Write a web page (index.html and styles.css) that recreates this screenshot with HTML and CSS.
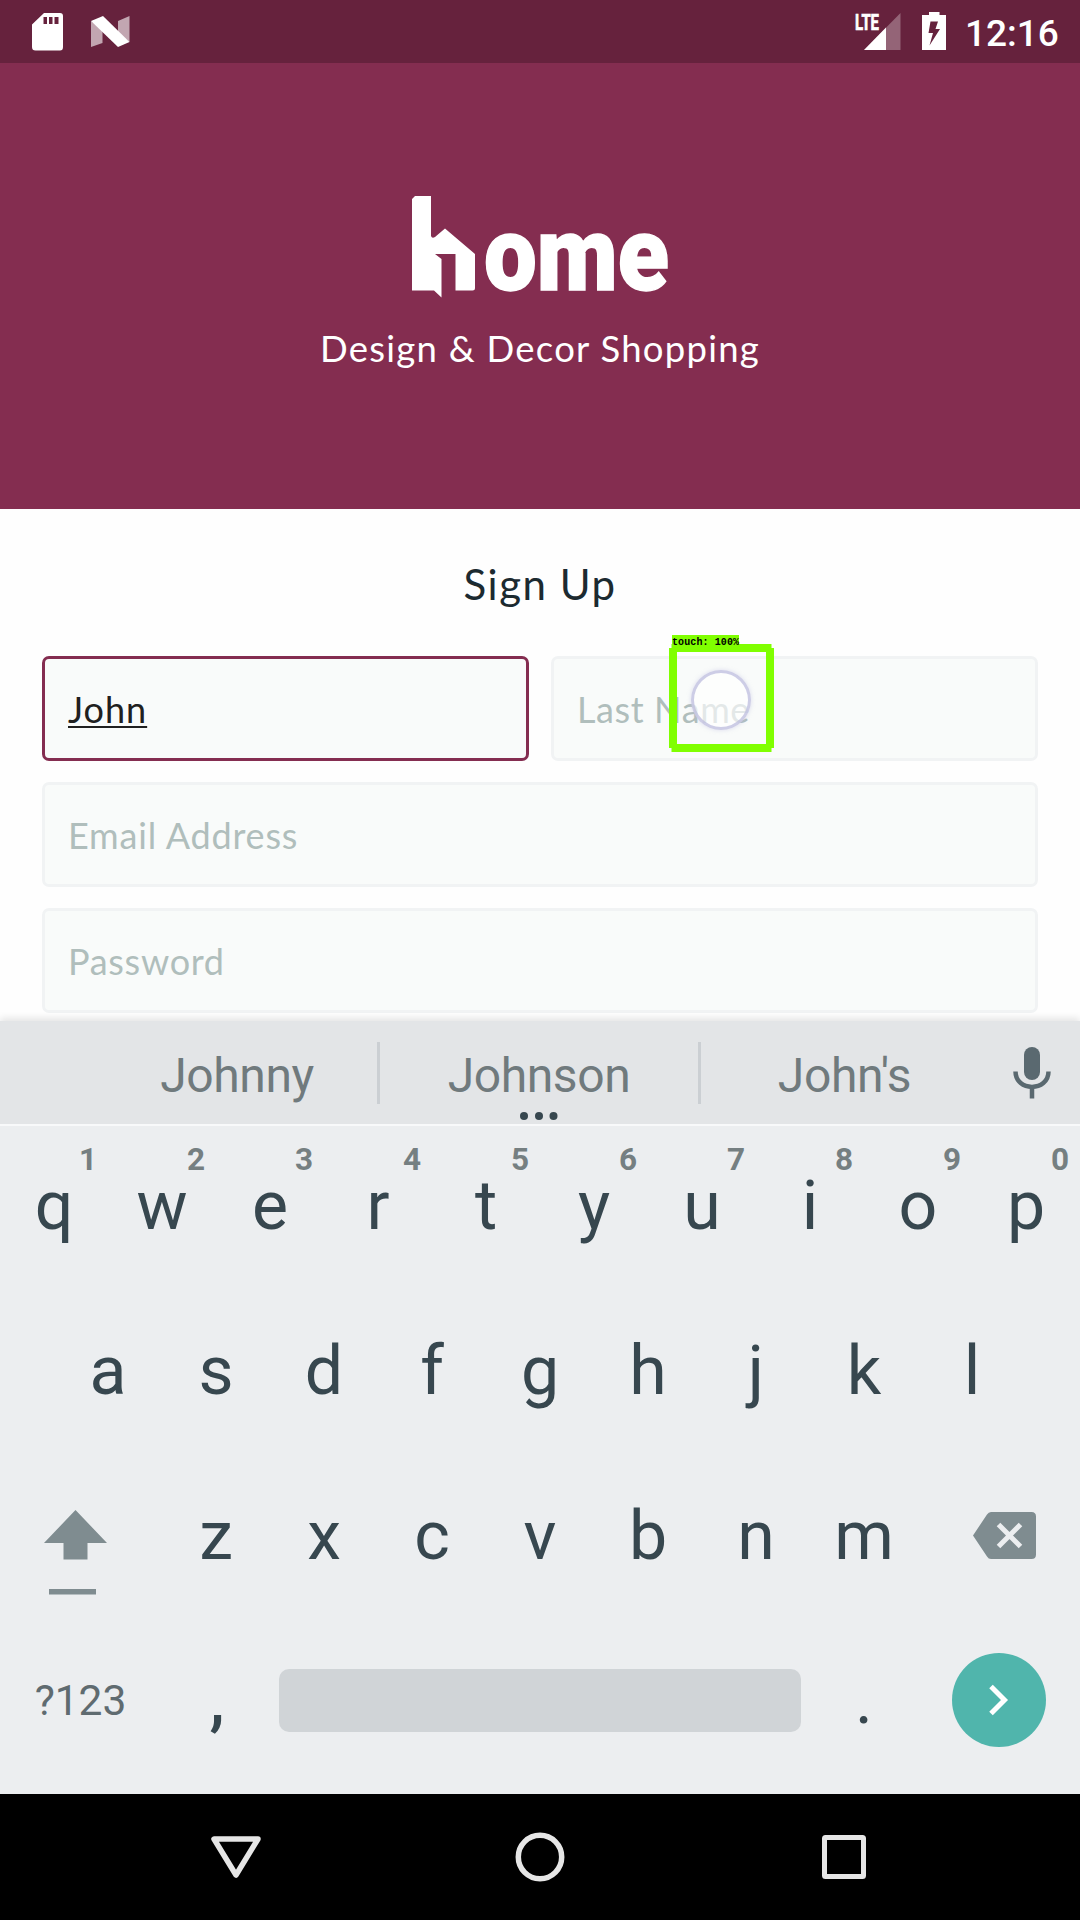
FILE: index.html
```html
<!DOCTYPE html>
<html lang="en">
<head>
<meta charset="utf-8">
<title>Home – Sign Up</title>
<link rel="stylesheet" href="styles.css">
</head>
<body>
<div class="screen">
  <header class="status-bar">
    <svg class="sd" width="31" height="39" viewBox="0 0 31 39"><path fill="#fff" fill-rule="evenodd" d="M12 1H28Q31 1 31 4V35Q31 38.500 28 38.500H3.500Q0 38.500 0 35V12.500ZM11.500 5V12H15V5ZM17 5V12H20.500V5ZM22.500 5V12H26.500V5Z"/></svg>
    <svg class="nougat" width="39" height="32" viewBox="0 0 39 32"><path fill="#fff" opacity=".6" d="M0 5L11.500 13V27L0 31ZM27 5L38.500 0V26L27 18Z"/><path fill="#fff" d="M0 5L12 0L38.500 26L27 31Z"/></svg>
    <span class="spacer"></span>
    <svg class="signal" width="46" height="38" viewBox="0 0 46 38"><path fill="#fff" opacity=".3" d="M45.500 0V37H9Z"/><path fill="#fff" d="M31 14.500V37H9Z"/><rect width="26" height="18" fill="#66223d"/><text x="0" y="16.500" textLength="24" lengthAdjust="spacingAndGlyphs">LTE</text></svg>
    <svg class="battery" width="24" height="38" viewBox="0 0 24 38"><path fill="#fff" fill-rule="evenodd" d="M7 0H17.500V3H24V38H0V3H7ZM8.500 9.500L6.500 21H11L7.500 33.500L18 17H13.500L16 9.500Z"/></svg>
    <span class="clock">12:16</span>
  </header>

  <section class="hero">
    <svg class="logo" width="256" height="103" viewBox="0 0 256 103">
      <path fill="#fff" d="M0 3L3 0H19V40Q20 43 23 41L33 32.500L63 58V92Q63 94.500 60.500 94.500H43.500V58H23L29.500 63V101.500L22 94.500H0Z"/>
      <text x="72" y="93.500" textLength="185" lengthAdjust="spacingAndGlyphs">ome</text>
    </svg>
    <p class="tagline">Design &amp; Decor Shopping</p>
  </section>

  <main class="sign-up">
    <h1 class="title">Sign Up</h1>
    <div class="form">
      <div class="field focused"><span class="typed">John</span></div>
      <div class="field"><span class="last-name">Last Name</span></div>
      <div class="field wide"><span class="email">Email Address</span></div>
      <div class="field wide"><span class="password">Password</span></div>
    </div>
    <div class="touch">
      <svg width="105" height="108" viewBox="0 0 105 108"><path fill="#80ff00" fill-rule="evenodd" d="M2.500 0H102.500V4H105V104H102.500V108H2.500V104H0V4H2.500ZM8 8V100H97V8Z"/></svg>
      <span class="touch-label">touch: 100%</span>
      <span class="touch-dot"></span>
    </div>
  </main>

  <section class="keyboard">
    <div class="suggestions">
      <span class="suggestion first">Johnny</span>
      <span class="suggestion middle">Johnson
        <svg class="more" width="38" height="8" viewBox="0 0 38 8"><g fill="#37474f"><circle cx="4" cy="4" r="4"/><circle cx="19" cy="4" r="4"/><circle cx="33.500" cy="4" r="4"/></g></svg>
      </span>
      <span class="suggestion last">John's</span>
      <svg class="mic" width="38" height="52" viewBox="0 0 38 52"><rect x="11" y="0" width="16" height="33" rx="8" fill="#5a6970"/><path d="M2.500 24.500C2.500 45 35.500 45 35.500 24.500M19 40V51.500" fill="none" stroke="#5a6970" stroke-width="4.500"/></svg>
    </div>
    <div class="keys">
      <div class="row">
        <span class="key">q<sup>1</sup></span><span class="key">w<sup>2</sup></span><span class="key">e<sup>3</sup></span><span class="key">r<sup>4</sup></span><span class="key">t<sup>5</sup></span><span class="key">y<sup>6</sup></span><span class="key">u<sup>7</sup></span><span class="key">i<sup>8</sup></span><span class="key">o<sup>9</sup></span><span class="key">p<sup>0</sup></span>
      </div>
      <div class="row">
        <span class="key">a</span><span class="key">s</span><span class="key">d</span><span class="key">f</span><span class="key">g</span><span class="key">h</span><span class="key">j</span><span class="key">k</span><span class="key">l</span>
      </div>
      <div class="row">
        <span class="key side"><svg width="63" height="86" viewBox="0 0 63 86"><path fill="#7f8c90" d="M31.500 0L63 33H43.500V49.500H19.500V33H0ZM5 79H52V84.500H5Z"/></svg></span>
        <span class="key">z</span><span class="key">x</span><span class="key">c</span><span class="key">v</span><span class="key">b</span><span class="key">n</span><span class="key">m</span>
        <span class="key side erase"><svg width="63" height="47" viewBox="0 0 63 47"><path fill="#7f8c90" d="M18 0H58.500Q63 0 63 4.500V42.500Q63 47 58.500 47H18Q15.500 47 14 44.500L0 23.500L14 2.500Q15.500 0 18 0Z"/><path d="M25.500 12.500L47.500 34.500M47.500 12.500L25.500 34.500" stroke="#eceef0" stroke-width="5"/></svg></span>
      </div>
      <div class="row bottom">
        <span class="key side symbols">?123</span>
        <span class="key comma">,</span>
        <span class="space"></span>
        <span class="key">.</span>
        <span class="key side"><span class="enter"><svg width="22" height="32" viewBox="0 0 22 32"><path d="M3 2.500L16.500 16L3 29.500" fill="none" stroke="#fff" stroke-width="5"/></svg></span></span>
      </div>
    </div>
  </section>

  <nav class="nav-bar">
    <svg width="50" height="50" viewBox="0 0 50 50"><path d="M3 7H47L25 43Z" fill="none" stroke="#e6e6e6" stroke-width="5.500" stroke-linejoin="round"/></svg>
    <svg width="50" height="50" viewBox="0 0 50 50"><circle cx="25" cy="25" r="21.700" fill="none" stroke="#e6e6e6" stroke-width="5.500"/></svg>
    <svg width="50" height="50" viewBox="0 0 50 50"><rect x="5.500" y="5.500" width="39" height="39" rx="1" fill="none" stroke="#e6e6e6" stroke-width="5"/></svg>
  </nav>
</div>
</body>
</html>
```
FILE: styles.css
```css
* { box-sizing: border-box; margin: 0; padding: 0; }
body { background: #fff; font-family: Roboto, "Liberation Sans", sans-serif; }
svg { display: block; flex: none; overflow: visible; }
.screen { width: 1080px; height: 1920px; display: flex; flex-direction: column; overflow: hidden; }

.status-bar { height: 63px; flex: none; background: #66223d; display: flex; align-items: flex-start; padding: 12px 23px 0 32px; color: #fff; }
.nougat { margin: 4px 0 0 28px; }
.spacer { flex: 1; }
.signal { margin: 1px 21px 0 0; }
.signal text { font: 700 22px Roboto, sans-serif; fill: #fff; stroke: #fff; stroke-width: .7px; }
.battery { margin-right: 19px; }
.clock { font-size: 37px; font-weight: 500; line-height: 43px; width: 92px; white-space: nowrap; }

.hero { height: 446px; flex: none; background: #842d50; display: flex; flex-direction: column; align-items: center; padding-top: 133px; }
.logo text { font: 900 104px Roboto, sans-serif; fill: #fff; stroke: #fff; stroke-width: 1.5px; }
.tagline { margin-top: 27px; color: #fff; font: 36.5px/44px Lato, sans-serif; letter-spacing: 1.25px; white-space: nowrap; }

.sign-up { height: 512px; flex: none; position: relative; padding: 50px 42px 0; background: #fefefe; font-family: Lato, sans-serif; overflow: hidden; }
.title { font-size: 42px; font-weight: 400; line-height: 50px; letter-spacing: 1.5px; text-align: center; color: #1c2a30; margin-bottom: 47px; }
.form { display: grid; grid-template-columns: 487px 487px; gap: 21px 22px; }
.field { height: 105px; border: 3px solid #f1f3f4; border-radius: 7px; background: #f9fbfa; padding-left: 23px; font-size: 36px; line-height: 101px; color: #b0bebc; white-space: nowrap; }
.wide { grid-column: span 2; }
.focused { border-color: #842d50; color: #202020; }
.typed { letter-spacing: 1px; text-decoration: underline; text-decoration-thickness: 2px; text-underline-offset: 3px; }
.last-name { letter-spacing: .6px; }
.email { letter-spacing: .8px; }
.password { letter-spacing: .7px; }
.touch { position: absolute; left: 669px; top: 135px; }
.touch-label { position: absolute; left: 3px; top: -9px; width: 67px; height: 10px; background: #80ff00; color: #000; font: 700 10px/15px "Liberation Mono", monospace; letter-spacing: .1px; white-space: nowrap; }
.touch-dot { position: absolute; left: 22px; top: 26px; width: 60px; height: 60px; border: 3px solid rgba(188, 188, 222, .75); border-radius: 50%; background: rgba(255, 255, 255, .65); box-shadow: 0 0 4px rgba(190, 190, 225, .5); }

.keyboard { height: 773px; flex: none; position: relative; background: #eceef0; color: #37474f; box-shadow: 0 -3px 7px rgba(0, 0, 0, .1); }
.suggestions { height: 103px; background: #e3e5e7; display: flex; align-items: center; color: #707a7d; font-size: 48px; letter-spacing: -.4px; }
.suggestion { line-height: 68px; height: 62px; text-align: center; }
.first { width: 380px; padding-left: 97px; border-right: 3px solid #cbcfd3; }
.middle { width: 321px; position: relative; border-right: 3px solid #cbcfd3; }
.last { width: 287px; }
.more { position: absolute; left: 140px; top: 70.500px; }
.mic { margin: 1px 0 0 25px; }
.keys { border-top: 2px solid #f8f9fa; }
.row { height: 165px; display: flex; justify-content: center; align-items: center; }
.row:first-child { height: 163px; }
.key { position: relative; width: 108px; flex: none; text-align: center; font-size: 68px; line-height: 165px; }
.row:first-child .key { top: -1px; }
.key sup { position: absolute; left: 68px; top: 17px; width: 40px; font-size: 31.5px; line-height: 38px; font-weight: 700; color: #757f81; }
.side { width: 162px; display: flex; justify-content: center; align-items: center; }
.side > svg { margin: 32px 12px 0 0; }
.side.erase > svg { margin: -3px 0 0 11px; }
.bottom { height: 162px; }
.symbols { font-size: 42.5px; padding-right: 1px; color: #5f6b70; }
.comma { font-weight: 500; padding-left: 2px; }
.space { width: 522px; height: 63px; margin: 0 9px; background: #d0d4d7; border-radius: 10px; }
.enter { width: 94px; height: 94px; border-radius: 50%; background: #50b5ac; display: flex; align-items: center; justify-content: center; }

.nav-bar { height: 126px; flex: none; position: relative; background: #000; display: flex; justify-content: center; align-items: center; gap: 254px; }
```
